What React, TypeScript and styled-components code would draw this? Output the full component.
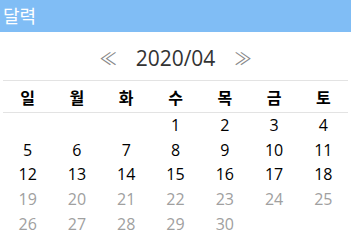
import styled, { createGlobalStyle } from "styled-components";

const GlobalStyle = createGlobalStyle`
  body {
    margin: 0;
    background: #fff;
    font-family: "Open Sans", "Noto Sans CJK KR", sans-serif;
  }
`;

const Wrap = styled.div`
  width: 351px;
`;
const TitleBar = styled.div`
  height: 32px;
  line-height: 32px;
  padding-left: 3px;
  background: #80bdf5;
  color: #fff;
  font-size: 18px;
`;
const Body = styled.div`
  padding: 0 3px;
`;
const MonthNav = styled.div`
  display: flex;
  align-items: center;
  justify-content: center;
  gap: 19px;
  height: 48px;
  padding-top: 3px;
  box-sizing: border-box;
`;
const Arrow = styled.span`
  color: #888;
  font-size: 17px;
  font-family: "Noto Sans CJK KR", sans-serif;
  cursor: pointer;
`;
const MonthText = styled.span`
  color: #333;
  font-size: 21px;
  font-weight: 500;
`;
const Grid = styled.div`
  display: grid;
  grid-template-columns: repeat(7, 1fr);
`;
const WeekRow = styled(Grid)`
  border-top: 1px solid #e3e3e3;
  border-bottom: 1px solid #e3e3e3;
  height: 31px;
  align-items: center;
`;
const WeekCell = styled.div`
  text-align: center;
  font-weight: bold;
  font-size: 16px;
  color: #000;
`;
const DayCell = styled.div<{ $faded?: boolean }>`
  text-align: center;
  height: 24.7px;
  line-height: 24.7px;
  font-size: 16px;
  color: ${(p) => (p.$faded ? "#a0a0a0" : "#000")};
`;

const weekdays = ["일", "월", "화", "수", "목", "금", "토"];

function Days() {
  const cells = [];
  for (let i = 0; i < 3; i++) cells.push(<DayCell key={"e" + i} />);
  for (let d = 1; d <= 30; d++) {
    cells.push(
      <DayCell key={d} $faded={d >= 19}>
        {d}
      </DayCell>
    );
  }
  return <Grid>{cells}</Grid>;
}

export default function App() {
  return (
    <Wrap>
      <GlobalStyle />
      <TitleBar>달력</TitleBar>
      <Body>
        <MonthNav>
          <Arrow>≪</Arrow>
          <MonthText>2020/04</MonthText>
          <Arrow>≫</Arrow>
        </MonthNav>
        <WeekRow>
          {weekdays.map((w) => (
            <WeekCell key={w}>{w}</WeekCell>
          ))}
        </WeekRow>
        <Days />
      </Body>
    </Wrap>
  );
}
